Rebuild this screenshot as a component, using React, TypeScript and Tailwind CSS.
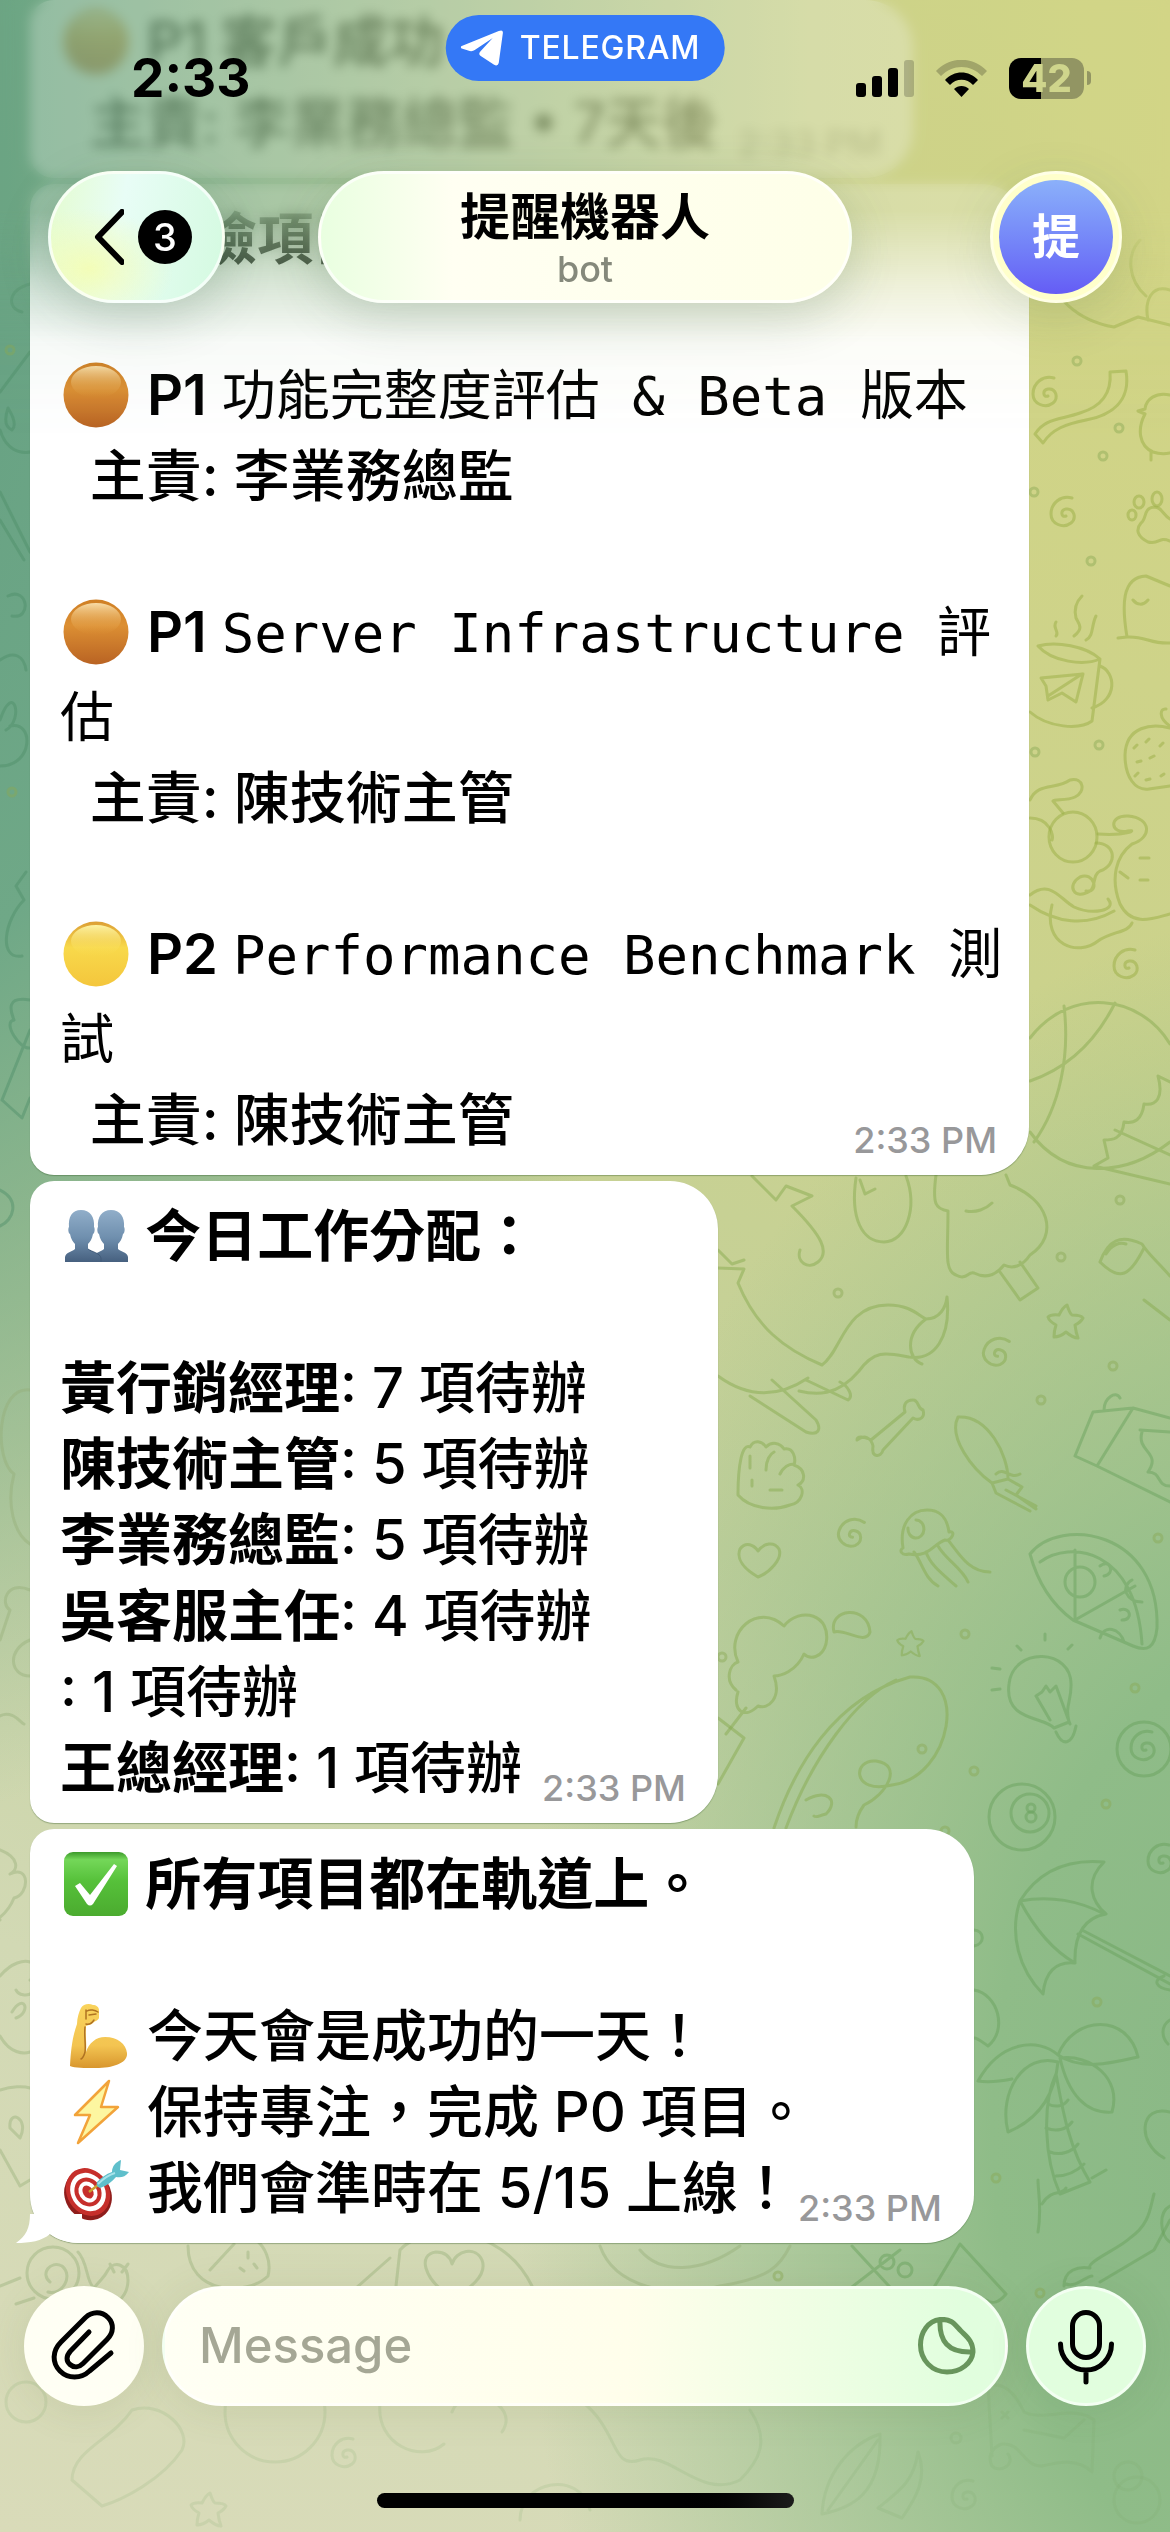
import type { ReactNode } from 'react'

const assignments = [
  { name: '黃行銷經理', count: 7 },
  { name: '陳技術主管', count: 5 },
  { name: '李業務總監', count: 5 },
  { name: '吳客服主任', count: 4 },
  { name: '', count: 1 },
]

const risks = [
  { level: 'P1', ball: 'orange', title: '功能完整度評估 & Beta 版本', owner: '李業務總監' },
  { level: 'P1', ball: 'orange', title: 'Server Infrastructure 評估', owner: '陳技術主管' },
  { level: 'P2', ball: 'yellow', title: 'Performance Benchmark 測試', owner: '陳技術主管' },
]

/* ---------- emoji ---------- */

function Emoji({ label, children }: { label: string; children: ReactNode }) {
  return (
    <svg role="img" aria-label={label} viewBox="0 0 72 72" className="inline-block h-[72px] w-[72px] align-[-16px]">
      {children}
    </svg>
  )
}

function Ball({ tone }: { tone: string }) {
  const orange = tone === 'orange'
  const id = `ball-${tone}`
  return (
    <Emoji label={orange ? '🟠' : '🟡'}>
      <defs>
        <linearGradient id={id} x1="0" y1="0" x2="0" y2="1">
          <stop offset="0" stopColor={orange ? '#cf7f24' : '#dc9f35'} />
          <stop offset="0.4" stopColor={orange ? '#dc8f33' : '#f8d94b'} />
          <stop offset="1" stopColor={orange ? '#b96323' : '#f4c63c'} />
        </linearGradient>
        <linearGradient id={`${id}-shine`} x1="0" y1="0" x2="0" y2="1">
          <stop offset="0" stopColor={orange ? '#f8dca6' : '#fdf4a4'} />
          <stop offset="1" stopColor={orange ? '#e29a3a' : '#f9da4c'} stopOpacity="0" />
        </linearGradient>
      </defs>
      <circle cx="36" cy="36" r="32.5" fill={`url(#${id})`} />
      <ellipse cx="36" cy="23" rx="25" ry="16" fill={`url(#${id}-shine)`} />
    </Emoji>
  )
}

function Busts() {
  return (
    <Emoji label="👥">
      <defs>
        <linearGradient id="bust" x1="0" y1="8" x2="0" y2="62" gradientUnits="userSpaceOnUse">
          <stop offset="0" stopColor="#93b0cb" />
          <stop offset="0.55" stopColor="#6f8fae" />
          <stop offset="1" stopColor="#46607f" />
        </linearGradient>
      </defs>
      <g fill="url(#bust)">
        <path d="M51 10c9 0 14 7 13 17 1 1 1 6-1 7-1 5-3 8-5 10v5c3 3 9 3 10 8v5H34v-5c1-5 7-5 10-8v-5c-2-2-4-5-5-10-2-1-2-6-1-7-1-10 4-17 13-17z" />
        <path d="M21 10c9 0 14 7 13 17 1 1 1 6-1 7-1 5-3 8-5 10v5c4 3 12 4 13 9v4H5v-5c1-5 7-5 10-8v-5c-2-2-4-5-5-10-2-1-2-6-1-7-1-10 3-17 12-17z" />
      </g>
      <path d="M28 49c4 3 12 4 13 9v4" fill="none" stroke="#405a79" strokeWidth="1" />
    </Emoji>
  )
}

function Check() {
  return (
    <Emoji label="✅">
      <defs>
        <linearGradient id="check" x1="0" y1="0" x2="0" y2="1">
          <stop offset="0" stopColor="#3c9a2b" />
          <stop offset="0.12" stopColor="#74d759" />
          <stop offset="0.45" stopColor="#56c13a" />
          <stop offset="1" stopColor="#4bab2f" />
        </linearGradient>
      </defs>
      <rect x="4" y="4" width="64" height="64" rx="9" fill="url(#check)" />
      <path d="M15 38l5-3 10 12 24-31 3 2-24 38q-3 3-6 0z" fill="#fff" />
    </Emoji>
  )
}

function Biceps() {
  return (
    <Emoji label="💪">
      <defs>
        <linearGradient id="biceps" x1="0" y1="0" x2="0" y2="1">
          <stop offset="0" stopColor="#f9d35c" />
          <stop offset="0.65" stopColor="#f3c451" />
          <stop offset="1" stopColor="#d8962e" />
        </linearGradient>
      </defs>
      <path d="M21 8c2-4 8-5 12-3 3 0 6 2 6 5v8c-1 3-5 3-7 6l-6 2c-1 9 1 18 0 26 3-9 10-15 19-15 13 0 21 7 22 16 1 10-14 15-31 15-12 0-21 0-26-2 1-19 3-31 7-42 0-6 2-12 4-16z" fill="url(#biceps)" />
      <path d="M27 11c3-2 8-1 11 1M29 15l7-1M26 10v9M25 27c-1 9 1 18 0 25-1 4-2 6-4 7M26 24c4 1 6-1 8-4" fill="none" stroke="#b07322" strokeWidth="1.5" strokeLinecap="round" />
    </Emoji>
  )
}

function Bolt() {
  return (
    <Emoji label="⚡">
      <path d="M49 5L15 39h15L18 67l40-36H41z" fill="#fdf6a0" stroke="#f2a33a" strokeWidth="2.5" strokeLinejoin="round" />
    </Emoji>
  )
}

function Target() {
  return (
    <Emoji label="🎯">
      <ellipse cx="28" cy="43" rx="23" ry="26" transform="rotate(-32 28 43)" fill="#8f1d1b" />
      <g transform="rotate(-32 28 40)">
        <ellipse cx="28" cy="40" rx="21" ry="25" fill="#c62f2b" />
        <ellipse cx="28" cy="40" rx="17" ry="20" fill="#fff" />
        <ellipse cx="28" cy="40" rx="13" ry="15" fill="#c62f2b" />
        <ellipse cx="28" cy="40" rx="9" ry="11" fill="#fff" />
        <ellipse cx="28" cy="40" rx="5" ry="7" fill="#c62f2b" />
      </g>
      <path d="M29 40l9-7" stroke="#c9a02e" strokeWidth="2.5" />
      <path d="M37 30c4-4 9-8 15-10 0-6 4-10 9-12l-1 10 9 2c-4 5-8 6-13 5-4 5-10 9-16 11-3-1-4-3-3-6z" fill="#5fbfcb" />
      <path d="M38 32c5-5 10-9 17-11" stroke="#a8e3ea" strokeWidth="2" fill="none" />
    </Emoji>
  )
}

function Warning() {
  return (
    <Emoji label="⚠️">
      <path d="M36 6l32 58H4z" fill="#f9d03e" stroke="#e8b12c" strokeWidth="3" strokeLinejoin="round" />
      <path d="M36 24v20M36 52v4" stroke="#333" strokeWidth="6" strokeLinecap="round" />
    </Emoji>
  )
}

/* ---------- wallpaper ---------- */

function Spiral({ x, y, r = 0 }: { x: number; y: number; r?: number }) {
  return (
    <path
      transform={`translate(${x} ${y}) rotate(${r})`}
      d="M1 1c-5 2-6-6 0-7 8-1 11 9 5 14-8 6-20 1-20-9C-14-12-4-20 7-17"
    />
  )
}

function Star({ x, y, s = 1 }: { x: number; y: number; s?: number }) {
  return (
    <path
      transform={`translate(${x} ${y}) scale(${s})`}
      d="M2-17q3 9 5 10 9 0 11 3-2 4-8 7 1 8 3 13-5 0-12-6-6 5-12 5 0-6 2-12-7-4-8-8 3-3 11-2 4-8 8-10z"
    />
  )
}

const dots = [
  [1077, 361], [1119, 428], [1103, 456], [1034, 492], [1091, 561], [1099, 745], [1035, 752], [1120, 1200], [1061, 1257],
  [838, 1293], [1113, 1366], [1041, 1400], [1158, 1538], [965, 1634], [1135, 1688], [922, 1749], [974, 1771], [1106, 1804],
  [945, 1831], [1097, 2002], [996, 2178], [722, 1657], [1040, 2293], [10, 350], [12, 792], [778, 2276],
]

function Wallpaper() {
  return (
    <div
      aria-hidden="true"
      className="absolute inset-0 bg-[radial-gradient(ellipse_75%_58%_at_-12%_14%,#65a082_0%,#6fa887_42%,#6fa88700_100%),radial-gradient(ellipse_68%_48%_at_112%_84%,#88b785_0%,#8fbc88_40%,#8fbc8800_100%),linear-gradient(200deg,#d4d583_0%,#cbd28c_35%,#c3d09c_58%,#d2d9b4_80%,#d9dbb9_100%)]"
    >
      <svg viewBox="0 0 1170 2532" preserveAspectRatio="xMidYMid slice" className="h-full w-full" fill="none" strokeWidth="3" strokeLinecap="round" strokeLinejoin="round">
        <g stroke="#9aae43" strokeOpacity="0.5">
          <path d="M1110 372l16-1c5 30-14 44-40 49-20 4-34 9-43 23l-8-9c10-16 25-14 45-21 20-6 32-18 30-41z" />
          <path d="M1036 255c18 45 42 66 78 72l24-10 32 8M1140 240c-14 15-12 40 6 56M1170 290c-18-6-26 10-22 30" />
          <Spiral x={1047} y={395} />
          <Spiral x={1065} y={515} />
          <path d="M1170 395c-14-3-24 4-25 14l-7 2 7 3c-8 15-6 32 8 38 6 2 12 2 17 1M1151 452v8" />
          <ellipse cx="1139" cy="502" rx="5" ry="6" />
          <ellipse cx="1157" cy="499" rx="5" ry="7" />
          <ellipse cx="1132" cy="515" rx="4" ry="5" />
          <path d="M1170 541c-12-5-10 4-22 1-10-5-13-12-7-19 6-4 2-15 13-16 8 0 9 8 16 12" />
          <path d="M1170 643c-20 1-24-7-43-6-5-30-6-60 19-61l24 10M1133 600c4 5 10 6 15 0M1127 637l-9 1" />
          <path d="M1038 646c18-5 48 0 62 13l-8 62c-12 9-44 7-62-9M1038 646c14 16 46 20 62 13M1100 666c16 6 18 34-8 42M1041 678l42-4-7 28-14-9-14 7-2-14z M1048 696l34-22" />
          <path d="M1074 636c10-8 5-12 2-18-2-8 0-16 6-22M1086 640c8-4 5-14 10-24M1056 636c4-4-4-8 0-14" />
          <path d="M1170 728c-18-5-44-2-45 27 0 22 10 36 24 34l21-3M1170 726c-12-8-10-18-4-17" />
          <path d="M1134 748l3-3M1146 742l3-3M1160 746l3-3M1137 762l4-1M1150 758l4-2M1135 776l3-3M1146 780l4-1M1161 776l3-2" />
          <ellipse cx="1073" cy="837" rx="24" ry="25" />
          <path d="M1030 800c8-18 26-10 40-20 14-3 16 12 5 17-8 4-20 2-22 4l10 12M1098 834c30 2 40-5 30-3-18 4-20-16 0-15 24 2 24 22 4 28-16 12-22 34-12 60 12 24 34 14 50 10M1030 818c20 0 24 18 22 22M1030 905c26 18 56 22 84 6M1052 905c-10 40 26 52 46 36 14-10 30-8 34-18" />
          <path d="M1096 843c20 0 22 22 4 28-8 4-4 16-10 20-16 10-24-6-10-14 14-6 20 16 6 14M1030 895c20-16 30 4 44 12 18 8 44 4 34-8M1120 872l8 6M1140 858h9M1140 880h8" />
          <Spiral x={1128} y={967} />
        </g>
        <g stroke="#86a94d" strokeOpacity="0.48">
          <path d="M1030 1038c40-52 110-44 140 6M1064 1006c6 50-4 100-30 136M1115 1003c-20 40-50 66-85 78M1030 1132c36 50 96 44 140 10M1170 1082l-12-6c6 22-2 30-14 28-2 16-10 20-20 18-2 18-12 18-20 18l4 18-14 8 76 18M1115 1130l55 25" />
          <path d="M752 1176l24 24 10-14 26 10-20 10c30 30 38 46 26 56-10 8-22 0-18-12M718 1250l14 14 12-4" />
          <path d="M856 1178c-6 40 6 64 28 64s34-34 22-66M860 1180l5 14 10-5" />
          <path d="M936 1175c-4 30 0 34 12 36 0 40-4 60 8 64 10 6 12-4 18-2 12 6 22 2 30-8 8 4 18 2 26-10 30-20 18-56-20-70l-4-10M1000 1272l20 28 18-12-18-26M966 1211c10 2 20-2 26-8" />
          <path d="M718 1268l26 1-6 14c18 44 46 66 84 82 20-14 22-60 66-60 22 0 30 10 38 14 14 0 20-12 21-22 4 40-12 64-38 60-22-4-34-8-50 14-22 26-44 24-60 20M718 1376c30 22 60 22 90 2M750 1396l56 36c12 4 16-2 10-12l-44-40M806 1380l42 20c6-4 0-14-8-18M926 1319c-22 16-18 40-4 45" />
          <path d="M1100 1262c8-22 20-28 42-18 6 10 14 16 28 32M1100 1262c20 20 30 14 44-14M1144 1300l26 20M1106 1254c6-10 14-12 20-10" />
          <Star x={1065} y={1322} />
          <Spiral x={997} y={1355} r={20} />
          <Spiral x={852} y={1536} r={20} />
          <path d="M857 1440c8-6 14-2 16 6-2 12 8 12 10 4l30-32c8 4 12-2 10-8-6-2-4-10-10-10-8 0-10 6-8 12l-34 28c-8-4-14-4-14 0z" />
          <path d="M958 1417c-10 20 14 52 34 66l16-4c0-24-20-64-50-62zM992 1483l4 10 34 18M1008 1479l14 8-6 8 20 14M996 1474c8-8 14 6 24 0M1006 1490l30 16" />
          <path d="M738 1495c0-30 4-52 12-48 4-8 12-6 16 0 6-6 14-4 18 2 10-2 12 10 10 16 12 4 12 16 4 20 8 4 4 18-8 20-16 6-40 4-52-10zM750 1468v-12M766 1470c0-10 4-16 8-18M780 1474c4-8 10-10 14-10M770 1490h12M752 1480v6" />
          <path d="M758 1577c-14-8-22-18-18-28 6-8 14-4 18 2 6-8 16-10 21-2 4 10-10 24-21 28z" />
          <path d="M903 1548c-4-24 8-38 24-38 14 0 20 8 22 22 8-2 2 10-4 8-12 4-16 18-36 14-8 2-10-4-6-6zM908 1528a8 9 0 1 0 8-8M914 1552c8 10 10 26 24 34M926 1552c4 12 14 20 30 34M938 1546c8 14 24 22 30 36M948 1540c10 12 20 32 42 32" />
          <path d="M736 1690c-12-10-6-26 2-28-14-30 20-60 46-36 16-20 48-12 42 18-4 14-16 16-22 10-8 18-24 22-30 22 8 22-6 34-16 30-14 14-26 4-20-14M746 1708l-20 26M834 1632c-6-24 34-28 36 0-4 14-26-4-36 0z" />
          <Star x={910} y={1644} s={0.75} />
          <path d="M774 1828c20-60 60-130 136-151 60-4 42 100-18 108-40 10-40-26-16-24 28 4 10 34-12 44-6 8-8 14-8 22M786 1828c26-70 70-130 110-148M806 1800c20-12 34 0 20 14-8 2-10 4-12 2M718 1718l26 20-26 46" />
        </g>
        <g stroke="#68a05c" strokeOpacity="0.48">
          <path d="M1075 1456l18-44 40-4-36 58zM1133 1408l37 10M1097 1466l73 36M1104 1410c0-12 12-20 16-12M1140 1430l30 2M1142 1432c-6 20 20 20 6 40 14 0 8 14 22 14" />
          <path d="M1030 1554c30-38 130-24 127 74-2 20-10 24-24 18l-60-26c-22-16-36-40-43-66zM1040 1562c30-22 96-14 102 82M1075 1550v70l60-34M1080 1582m-15 0a15 15 0 1 0 30 0a15 15 0 1 0-30 0M1100 1566c10-8 16 8 4 10M1120 1610c10-4 14 10 2 10M1100 1638c4-14 20-10 24 4M1142 1602c-16 0-22-16-10-22" />
          <path d="M1054 1728c-10-12-50-6-45-44 4-38 64-36 62 2 0 16-6 20-2 36zM1056 1732c6 14 16 14 20-6M1050 1720l-14-24 6-4 4-6 4 6 6-6 14 38M1017 1646l4 4M1045 1634v6M1072 1645l-4 4M992 1668l8 1M992 1690l8-1" />
          <circle cx="1022" cy="1817" r="33" />
          <circle cx="1030" cy="1813" r="19" />
          <circle cx="1031" cy="1808" r="4" />
          <circle cx="1031" cy="1817" r="5" />
          <circle cx="1144" cy="1749" r="27" />
          <Spiral x={1145} y={1749} />
          <Spiral x={1162} y={1862} />
          <path d="M1020 1901c20-32 50-42 84-39-20 20-12 40 2 52-22 4-32 20-31 49-20-2-30 10-32 31-24-24-34-60-23-93zM1020 1901c30-6 60 0 84 13M1020 1901c16 30 34 50 55 62M1078 1934l92 50M1082 1930l88 46M1170 1990c-14-2-18-10-6-14" />
          <path d="M1058 2055c-20-18-58-14-80 26 12 2 24 0 34-2M1058 2062c-34-10-60 30-50 70 24-10 46-30 50-70zM1058 2055c16-40 70-42 80 2-26 6-56 14-80-2zM1060 2058c30-4 62 20 52 54-26 2-44-18-52-54zM1056 2074c-14 30-12 84 4 120l30-12c-22-36-28-76-34-108zM1048 2104c8 4 16 2 20-4M1046 2128c10 4 20 2 26-6M1050 2152c10 4 22 0 28-8M1056 2176c10 0 20-4 28-12M1042 2204c10-16 20-8 24-16M1092 2178l14-8" />
          <path d="M974 1930c10 0 12 14 0 16M974 1990c24 4 34 40 14 56-6-4-10-8-14-8M1170 2020c-10 6-8 18-2 24M1170 2112c-30-8-34 30-6 46M1170 2206c-12 6-10 30 0 36" />
          <path d="M1038 2232c4-24 0-40 0-52M1064 2286c0-16 14-20 26-18-4-6 30-20 40-30 20-14 20-30 24-44M1100 2282l54-32 16-30M960 2244l-30 50 34 4M960 2244l46 50M1006 2294c-8 10-14 10-20 6M1066 2284c10 4 20-8 26-8" />
          <path d="M852 2246l48 52M848 2290l52-40M880 2262a7 7 0 1 0 14 0a7 7 0 1 0-14 0M898 2270a7 7 0 1 0 14 0a7 7 0 1 0-14 0" />
        </g>
        {/* strip left of the bubbles */}
        <g stroke="#4d8d68" strokeOpacity="0.45">
          <path d="M30 284c-22 6-24 24-8 28M0 392l30-40M8 408q10 16 4 22-10-4-4-22M0 430c6 20 20 24 30 22M0 492l30 60M0 520l24 40M8 596c20-10 24 24 4 20M0 660c14-10 24-4 26 10M0 720c14-40 24 0 6 10M10 726c24-6 24 40-10 40M26 872l-10 14 8 14c-20 20-26 60-2 56M30 1000c-24-4-20 10-16 20-12 2 6 30 16 28M2 1100l28-70M2 1100l20 18 8-20M0 1190c20 10 14 30 0 36" />
        </g>
        <g stroke="#94ad76" strokeOpacity="0.4">
          <path d="M30 1390c-34-4-36 70-16 84-8 30 0 60 16 70M30 1590c-24-10-30 14-20 20L0 1640M30 1640c-24 10-20 36 0 36M0 1716c12-6 20 6 24 8M0 1850c20 8 18 20 10 24 20-10 20 20 4 24-8 20-20 20-14 22" />
          <path d="M0 1976c12-14 24-16 30-14M0 2036c10 18 24 18 30 16M16 1990a10 8 0 1 0 14-10M12 2012c12-20 20 0 4 6M0 2090c12-4 24-4 30-2M10 2128c-2-20 20-10 10 10zM0 2150l20 36 10-6" />
          <circle cx="53" cy="2273" r="26" />
          <path d="M50 2282c-10-8 0-22 12-16 12 10 0 30-14 26M78 2252c10 10 8 30 16 36 8-10 10-10 14-18 6-10 20-6 20 10 0 12-6 18-10 22M110 2264l4 8M128 2264l-6 8M0 2286l20-8M16 2304l18-6M188 2246c0 50 60 50 80 30 4-16-4-30-12-36M210 2270l24-26M248 2252v6M254 2264l3 4M240 2268l4 3M356 2288l34-30M396 2286l4-36c20-24 100-30 132 36M452 2298c-30-20-34-44-16-46 8 0 14 4 16 12 4-14 24-18 30-4 6 16-14 30-30 38z" />
          <path d="M600 2246c14 40 70 54 120 40 50-8 60-20 70-40M640 2250c20 24 60 24 100-4" />
        </g>
        {/* faded row under the composer */}
        <g stroke="#7fa86c" strokeOpacity="0.16">
          <path d="M988 2386c14-4 26 4 36 26 20 10 50-8 70 8l-2 52c-14-14-34-10-50-6-20 0-20-24-40-22-12 4-14 14-10 22 8 8 24-2 16-12M988 2386l4 70M1002 2412l6 6M1008 2412l-6 6M1024 2430l40 8 20-18" />
          <path d="M880 2434c-30 10-56 40-58 80 30-6 60-20 58-80zM878 2440l-50 70M918 2452c-4 30-20 40-40 56l24 10c14-20 26-40 16-66z" />
          <Spiral x={966} y={2498} />
          <circle cx="1137" cy="2500" r="23" />
          <circle cx="1128" cy="2476" r="14" />
          <circle cx="956" cy="2438" r="5" />
          <circle cx="26" cy="2402" r="20" />
          <circle cx="275" cy="2412" r="50" />
          <path d="M72 2480c0-30 40-40 60-70 30-10 60 20 50 40-20 30-60 50-80 56zM380 2404c-4 40 40 60 64 40M452 2412c10-30 70-10 50 20M580 2400c40 30 30 70 60 60s60 40 100 20c20-20 30-40 10-70M520 2520c0-40 60-50 70-10" />
          <Spiral x={346} y={2456} />
          <Star x={208} y={2510} />
        </g>
        <g stroke="#8aa955" strokeOpacity="0.45">
          {dots.map(([x, y]) => (
            <circle key={`${x}-${y}`} cx={x} cy={y} r="4" />
          ))}
        </g>
      </svg>
    </div>
  )
}

/* ---------- messages ---------- */

function Bubble({ className = '', children }: { className?: string; children: ReactNode }) {
  return (
    <article className={`relative w-fit max-w-[999px] bg-white pr-6 pb-[17px] pl-[30px] shadow-[0_1px_1px_rgba(40,80,30,0.35)] ${className}`}>
      {children}
    </article>
  )
}

function Mono({ children }: { children: ReactNode }) {
  return (
    <span className="font-['DejaVu_Sans_Mono','Noto_Sans_CJK_TC',monospace] text-[54px] leading-none font-normal">{children}</span>
  )
}

function LastLine({ gap = 'gap-5', children }: { gap?: string; children: ReactNode }) {
  return (
    <div className={`flex items-end justify-between pr-2 ${gap}`}>
      <p className="whitespace-pre">{children}</p>
      <time className="text-[36px] leading-9 font-medium whitespace-nowrap text-[#98989a]">2:33 PM</time>
    </div>
  )
}

function Owner({ name }: { name: string }) {
  return <>{`  主責: ${name}`}</>
}

function Messages() {
  return (
    <main className="relative flex flex-1 flex-col items-start gap-1.5 px-[30px] text-[56px] leading-[76px] font-medium">
      <Bubble className="rounded-r-[48px] rounded-l-3xl rounded-t-none">
        <p className="leading-[85px]">
          <Ball tone="orange" /> <b className="font-semibold">P1 客戶成功</b>
        </p>
        <LastLine>
          <Owner name="李業務總監 • 7天後" />
        </LastLine>
      </Bubble>

      <Bubble className="rounded-l-3xl rounded-r-[48px] pt-[17px]">
        <h2 className="font-bold">
          <Warning /> 風險項目警示：
        </h2>
        {risks.map((risk, i) => (
          <section key={risk.title} className="pt-[76px]">
            <p className="leading-[85px]">
              <Ball tone={risk.ball} /> <b className="font-semibold">{risk.level}</b> <Mono>{risk.title}</Mono>
            </p>
            {i < risks.length - 1 ? (
              <p className="whitespace-pre">
                <Owner name={risk.owner} />
              </p>
            ) : (
              <LastLine>
                <Owner name={risk.owner} />
              </LastLine>
            )}
          </section>
        ))}
      </Bubble>

      <Bubble className="rounded-l-3xl rounded-r-[48px] pt-[17px]">
        <h2 className="pb-[76px] font-bold">
          <Busts /> 今日工作分配：
        </h2>
        {assignments.map((row) => (
          <p key={row.name}>
            <b className="font-bold">{row.name}</b>: {row.count} 項待辦
          </p>
        ))}
        <LastLine>
          <b className="font-bold">王總經理</b>: 1 項待辦
        </LastLine>
      </Bubble>

      <Bubble className="rounded-[48px] rounded-tl-3xl pt-[17px]">
        <h2 className="pb-[76px] font-bold">
          <Check /> 所有項目都在軌道上。
        </h2>
        <p>
          <Biceps /> 今天會是成功的一天！
        </p>
        <p>
          <Bolt /> 保持專注，完成 P0 項目。
        </p>
        <LastLine gap="gap-1">
          <Target /> 我們會準時在 5/15 上線！
        </LastLine>
        <svg aria-hidden="true" viewBox="0 0 66 29" className="absolute bottom-0 -left-3.5 h-[29px] w-[66px]">
          <path d="M14 0C14 14 10 22 0 29c14 0 26-2 34-9 8 6 18 9 32 9V0z" fill="#fff" />
        </svg>
      </Bubble>
    </main>
  )
}

/* ---------- header ---------- */

function StatusBar() {
  return (
    <div className="relative flex h-[171px] items-start justify-between pt-[46px] pr-[79px] pl-[131px]">
      <span className="text-[53px] leading-[64px] font-bold">2:33</span>
      <button
        type="button"
        className="absolute top-[15px] left-1/2 flex h-[66px] -translate-x-1/2 items-center gap-4 rounded-full bg-[#3478f6] pr-6 pl-[15px] text-[32px] leading-none font-medium tracking-wide text-white"
      >
        <svg aria-hidden="true" viewBox="0 0 43 36" className="h-9 w-[43px]" fill="currentColor">
          <path d="M1 16L38 1q5-2 4 3l-4 29q-1 4-5 1.500L20 26q-3-2 0-5L32 8 14 20q-2 1.500-5 1L1 18.500q-2-1.500 0-2.500z" />
        </svg>
        TELEGRAM
      </button>
      <div className="flex h-[64px] items-center gap-[22px]">
        <svg role="img" aria-label="Signal" viewBox="0 0 58 37" className="h-[37px] w-[58px]">
          <rect x="0" y="23" width="10" height="14" rx="3" />
          <rect x="16" y="16" width="10" height="21" rx="3" />
          <rect x="32" y="8" width="10" height="29" rx="3" />
          <rect x="48" y="0" width="10" height="37" rx="3" fillOpacity="0.2" />
        </svg>
        <svg role="img" aria-label="Wi-Fi" viewBox="0 0 51 37" className="h-[37px] w-[51px]">
          <path d="M0 11C14-4 37-4 51 11l-5 5C34 4 17 4 5 16z" fillOpacity="0.22" />
          <path d="M9 20c9-10 24-10 33 0l-5 5c-6-7-17-7-23 0z" />
          <path d="M18 29c4-4 11-4 15 0l-7.500 8z" />
        </svg>
        <div className="flex items-center gap-[3px]">
          <span className="flex h-[41px] w-[75px] items-center justify-center rounded-xl bg-linear-to-r from-black from-43% to-[#929563] to-43% text-[38px] leading-none font-extrabold text-[#cfd58c]">
            42
          </span>
          <span className="h-3.5 w-1 rounded-r-full bg-[#929563]" />
        </div>
      </div>
    </div>
  )
}

function Header() {
  return (
    <header className="absolute inset-x-0 top-0">
      <div className="absolute inset-x-0 top-0 h-[400px] backdrop-blur-[6px] [mask-image:linear-gradient(to_bottom,black_40%,transparent_70%)]" />
      <div className="absolute inset-x-0 top-0 h-[440px] bg-linear-to-r from-[#6ca583] from-0% via-[#c9d18b] via-70% to-[#d2d587] opacity-75 [mask-image:linear-gradient(to_bottom,black_48%,rgba(0,0,0,0.4)_66%,rgba(0,0,0,0.08)_78%,transparent)]" />
      <StatusBar />
      <div className="relative grid grid-cols-[1fr_minmax(0,534px)_1fr] items-center px-12">
        <button
          type="button"
          aria-label="Back, 3 unread chats"
          className="flex h-[132px] w-[177px] items-center gap-3.5 rounded-full border-3 border-white/70 bg-[radial-gradient(ellipse_at_22%_75%,#f3fdb8_0%,#f3fdb800_45%),linear-gradient(100deg,#e4fcd0,#e8fdf6_40%,#d4fae0)] pl-[43px] shadow-[0_14px_50px_rgba(40,80,50,0.22)]"
        >
          <svg aria-hidden="true" viewBox="0 0 30 56" className="h-14 w-[30px]" fill="none" stroke="currentColor" strokeWidth="6" strokeLinecap="round" strokeLinejoin="round">
            <path d="M28 3L4 28l24 25" />
          </svg>
          <span className="flex size-[54px] items-center justify-center rounded-full bg-black text-[38px] leading-none font-medium text-white">3</span>
        </button>
        <button
          type="button"
          className="flex h-[132px] flex-col items-center justify-center rounded-full border-3 border-white/70 bg-linear-to-r from-[#e9ffe0] via-[#fffff2] via-25% to-[#feffe8] pt-1 shadow-[0_14px_50px_rgba(40,80,50,0.22)]"
        >
          <span className="text-[50px] leading-[60px] font-bold">提醒機器人</span>
          <span className="text-[36px] leading-[44px] font-medium text-[#85897b]">bot</span>
        </button>
        <button
          type="button"
          aria-label="提醒機器人"
          className="flex size-[132px] items-center justify-center justify-self-end rounded-full border-3 border-[#ffffe6] bg-[#ffffcb] shadow-[0_14px_50px_rgba(40,80,50,0.15)]"
        >
          <span className="flex size-[114px] items-center justify-center rounded-full bg-linear-to-b from-[#8bb0fa] to-[#655cf5] text-[48px] leading-none font-bold text-white">
            提
          </span>
        </button>
      </div>
    </header>
  )
}

/* ---------- composer ---------- */

function Composer() {
  return (
    <footer className="relative flex flex-col items-center pt-[43px]">
      <form className="flex w-full items-center gap-[18px] px-6" onSubmit={(e) => e.preventDefault()}>
        <button type="button" aria-label="Attach" className="size-[120px] shrink-0 rounded-full bg-[#fffff4] shadow-[0_4px_40px_rgba(90,110,60,0.12)]">
          <svg viewBox="0 0 120 120" fill="none" stroke="currentColor" strokeWidth="5" strokeLinecap="round" strokeLinejoin="round">
            <path d="M65 46L46.500 65C42 70 42 75 46 78.500c4 3.500 9 3 13-1L83 53.500c7-7 7-16 1-22-6.500-6.500-16-6-22.500 0L37 56c-9 9-9 21-1 29 8 8 21 8 29.500 0L87 67" />
          </svg>
        </button>
        <div className="flex h-[120px] min-w-0 flex-1 items-center rounded-full border-3 border-white/60 bg-linear-to-r from-[#fffff4] via-[#fffeeb] via-55% to-[#e1fede] to-95% pr-[29px] pl-[34px] shadow-[0_4px_40px_rgba(90,110,60,0.12)]">
          <input
            type="text"
            aria-label="Message"
            placeholder="Message"
            className="min-w-0 flex-1 bg-transparent text-[49px] leading-[60px] font-medium outline-none placeholder:text-[#a5a795]"
          />
          <button type="button" aria-label="Stickers" className="text-[#68955c]">
            <svg viewBox="0 0 58 58" className="size-[58px]" fill="none" stroke="currentColor" strokeWidth="5" strokeLinecap="round" strokeLinejoin="round">
              <path d="M22 2.500C10 4 2.500 15 2.500 28c0 15 11.500 27 26.500 27 14 0 25-9 26-20 0-11-6-15-12-21S34 1.500 22 2.500zM22 3c-1 21 8 33 32 32" />
            </svg>
          </button>
        </div>
        <button type="button" aria-label="Record voice message" className="size-[120px] shrink-0 rounded-full border-3 border-white/60 bg-[#e1fede] shadow-[0_4px_40px_rgba(60,110,60,0.12)]">
          <svg viewBox="3 3 114 114" fill="none" stroke="currentColor" strokeWidth="5" strokeLinecap="round">
            <rect x="46.500" y="26.500" width="27" height="45" rx="13.500" />
            <path d="M34.500 58a25.500 26 0 0 0 51 0M60 84v12" />
          </svg>
        </button>
      </form>
      <div className="mt-[87px] mb-6 h-[15px] w-[417px] rounded-full bg-linear-to-r from-black from-70% to-[#1c1c1c]" />
    </footer>
  )
}

export default function App() {
  return (
    <div className="relative flex min-h-screen flex-col overflow-hidden font-['Inter','Noto_Sans_CJK_TC',sans-serif] text-black">
      <Wallpaper />
      <Messages />
      <Composer />
      <Header />
    </div>
  )
}
